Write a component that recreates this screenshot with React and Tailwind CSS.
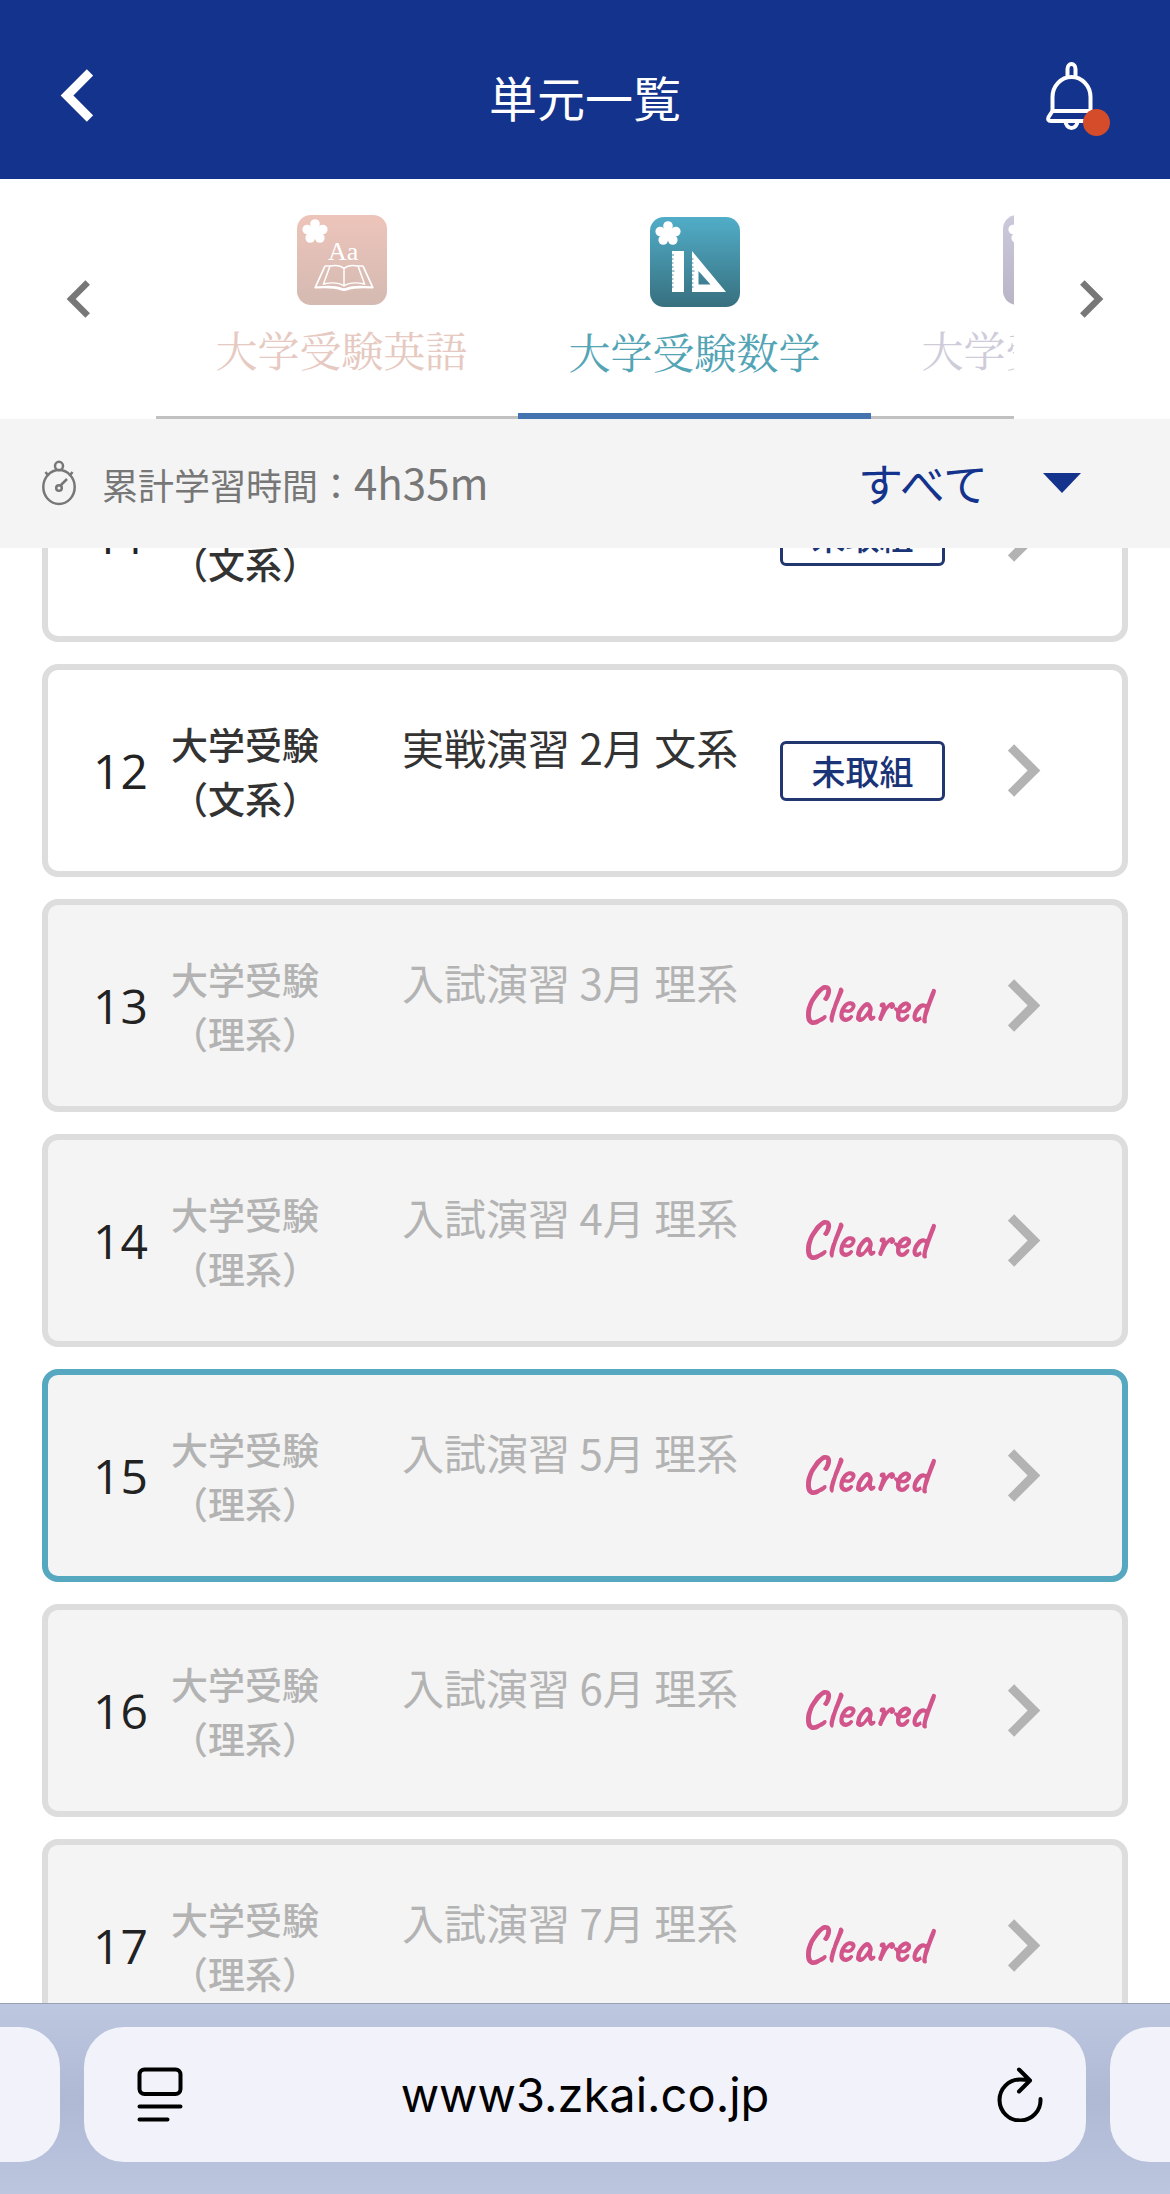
import { useLayoutEffect, useRef } from 'react';

const units = [
  { no: 11, course: '大学受験', group: '（文系）', title: '実戦演習 1月 文系', cleared: false },
  { no: 12, course: '大学受験', group: '（文系）', title: '実戦演習 2月 文系', cleared: false },
  { no: 13, course: '大学受験', group: '（理系）', title: '入試演習 3月 理系', cleared: true },
  { no: 14, course: '大学受験', group: '（理系）', title: '入試演習 4月 理系', cleared: true },
  { no: 15, course: '大学受験', group: '（理系）', title: '入試演習 5月 理系', cleared: true, current: true },
  { no: 16, course: '大学受験', group: '（理系）', title: '入試演習 6月 理系', cleared: true },
  { no: 17, course: '大学受験', group: '（理系）', title: '入試演習 7月 理系', cleared: true },
];

const subjects = [
  { id: 'english', label: '大学受験英語', color: 'text-[#e6c9c0]', from: '#edc4ba', to: '#d4bab2' },
  { id: 'math', label: '大学受験数学', color: 'text-[#53a4b5]', from: '#51adc8', to: '#37707f', active: true },
  { id: 'physics', label: '大学受験物理', color: 'text-[#cfccda]', from: '#cdc9dc', to: '#b9b5c6' },
];

function Chevron({ left, className }) {
  return (
    <svg viewBox="0 0 33 53" className={className} fill="none" stroke="currentColor" strokeWidth="9" aria-hidden="true">
      <path d={left ? 'M30 3.5 7 26.5 30 49.5' : 'M3 3.5 26 26.5 3 49.5'} />
    </svg>
  );
}

function BellIcon() {
  return (
    <svg viewBox="0 0 55 72" className="h-[72px] w-[55px]" fill="none" stroke="currentColor" strokeWidth="4" strokeLinejoin="round" aria-hidden="true">
      <path d="M23.5 17V9a4 5 0 0 1 8 0v8" />
      <path d="M8.5 51V37a19 20 0 0 1 38 0v14Z" />
      <path d="M8.5 51 4.6 57q-1.6 4 2.4 4h41q4 0 2.4-4L46.5 51" />
      <path d="M21.5 61a6 7 0 0 0 12 0" />
    </svg>
  );
}

function StopwatchIcon() {
  return (
    <svg viewBox="0 0 34 46" className="h-[46px] w-[34px]" fill="none" stroke="currentColor" strokeWidth="2.5" aria-hidden="true">
      <ellipse cx="17" cy="27" rx="15.7" ry="17" />
      <ellipse cx="17" cy="6" rx="4" ry="4.2" />
      <circle cx="17" cy="28" r="2.8" />
      <path d="M18.5 25.5 25 19M3.5 12l3 4M30.5 12l-3 4" />
    </svg>
  );
}

function SubjectIcon({ subject }) {
  const { id, from, to } = subject;
  return (
    <svg viewBox="0 0 90 90" className="h-[90px] w-[90px]" aria-hidden="true">
      <defs>
        <linearGradient id={`bg-${id}`} x1="0" y1="0" x2="0" y2="1">
          <stop offset="0" stopColor={from} />
          <stop offset="1" stopColor={to} />
        </linearGradient>
      </defs>
      <rect width="90" height="90" rx="14" fill={`url(#bg-${id})`} />
      <g fill="#fff">
        <circle cx="18" cy="9" r="4.8" />
        <circle cx="25.8" cy="14.5" r="4.8" />
        <circle cx="22.8" cy="23" r="4.8" />
        <circle cx="13.2" cy="23" r="4.8" />
        <circle cx="10.2" cy="14.5" r="4.8" />
        <circle cx="18" cy="17" r="6.5" />
      </g>
      {id === 'english' && (
        <>
          <text x="31" y="44.5" fontSize="26" fill="#fff" fontFamily="Liberation Serif, serif">Aa</text>
          <path d="M28 51 18 73M66 51l10 22" fill="none" stroke="#fff" strokeWidth="1.8" />
          <path d="M18 71.5q19-2 26 1 3 1.5 6 0 7-3 26-1v2q-19-1-24.5 1.5-4.5 2-9 0Q37 72.5 18 73.5Z" fill="#fff" />
          <path d="M28 51h5M61 51h5M47 53.5Q42 49 33 51l-6.5 18Q40 66 47 71q7-5 20.5-2L61 51q-9-2-14 2.5V71" fill="none" stroke="#fff" strokeWidth="1.5" />
        </>
      )}
      {id === 'math' && (
        <>
          <path d="M22 34h12v41H22Z" fill="#fff" />
          <path d="M42 34 76 75H42ZM48.5 54v13.5H60.5Z" fill="#fff" fillRule="evenodd" />
          <path d="M21.5 38h2.5M21.5 42h2M21.5 46h2M21.5 50h2M21.5 54h3M21.5 58h2M21.5 62h2M21.5 66h2M21.5 70h2M41.5 42h2M41.5 46h2M41.5 50h2M41.5 54h3M41.5 58h2M41.5 62h2M41.5 66h2M41.5 70h2" stroke="#3f8ca1" strokeWidth="1" />
        </>
      )}
    </svg>
  );
}

function Header() {
  return (
    <header className="grid h-[179px] shrink-0 grid-cols-[1fr_auto_1fr] items-center bg-[#14338c] px-[60px] pt-3 text-white">
      <button type="button" aria-label="戻る" className="justify-self-start">
        <Chevron left className="h-[53px] w-[33px]" />
      </button>
      <h1 className="text-5xl whitespace-nowrap">単元一覧</h1>
      <button type="button" aria-label="お知らせ" className="relative justify-self-end pr-[11px]">
        <BellIcon />
        <span className="absolute right-0 -bottom-1 size-[27px] rounded-full bg-[#d44c29]" />
      </button>
    </header>
  );
}

function SubjectTabs() {
  return (
    <nav className="flex h-60 shrink-0 bg-white text-[#777]">
      <button type="button" aria-label="前の科目" className="flex w-[156px] shrink-0 items-center justify-center">
        <Chevron left className="h-[38px] w-6" />
      </button>
      <div className="flex min-w-0 flex-1 overflow-hidden pl-[9px] shadow-[inset_0_-3px_0_#c1c1c1]">
        {subjects.map((subject) => (
          <button
            key={subject.id}
            type="button"
            className={`flex w-[353px] shrink-0 flex-col items-center gap-4 text-[42px] leading-[56px] ${subject.color} ${
              subject.active ? 'border-b-[6px] border-[#4573b0] pt-[38px]' : 'pt-9'
            }`}
          >
            <SubjectIcon subject={subject} />
            <span className="font-['Noto_Serif_CJK_JP','Noto_Sans_CJK_JP',serif] whitespace-nowrap">{subject.label}</span>
          </button>
        ))}
      </div>
      <button type="button" aria-label="次の科目" className="flex w-[156px] shrink-0 items-center justify-center">
        <Chevron className="h-[38px] w-6" />
      </button>
    </nav>
  );
}

function FilterBar() {
  return (
    <div className="flex h-[129px] shrink-0 items-center justify-between bg-[#f4f4f4] pr-[89px] pb-0.5 pl-[42px]">
      <div className="flex items-center gap-[26px] text-[#777]">
        <StopwatchIcon />
        <p className="text-4xl whitespace-nowrap">
          累計学習時間：<span className="text-[42px]">4h35m</span>
        </p>
      </div>
      <label className="relative flex items-center text-[#14338c]">
        <span className="sr-only">絞り込み</span>
        <select className="w-[223px] appearance-none bg-transparent text-[45px] leading-[60px] outline-none">
          <option>すべて</option>
          <option>未取組</option>
          <option>Cleared</option>
        </select>
        <svg viewBox="0 0 38 20" className="pointer-events-none absolute right-0 h-5 w-[38px]" fill="currentColor" aria-hidden="true">
          <path d="M0 0h38L19 20Z" />
        </svg>
      </label>
    </div>
  );
}

function UnitCard({ unit }) {
  const border = unit.current ? 'border-[#55a8c0]' : 'border-[#ddd]';
  const tone = unit.cleared ? 'bg-[#f4f4f4] text-[#b3b3b3]' : 'bg-white text-[#333]';

  return (
    <li>
      <a href={`#unit-${unit.no}`} className={`flex h-[213px] items-center rounded-2xl border-[6px] pr-[81px] pl-[45px] ${border} ${tone}`}>
        <span className="w-[78px] shrink-0 font-['Open_Sans',sans-serif] text-5xl text-[#222]">{unit.no}</span>
        <span className="flex w-[231px] shrink-0 flex-col text-[37px] leading-[54px] font-medium">
          <span>{unit.course}</span>
          <span>{unit.group}</span>
        </span>
        <span className="flex-1 self-start pt-[49px] text-[42px] leading-[56px] whitespace-nowrap">{unit.title}</span>
        <span className="flex w-[165px] shrink-0 justify-center">
          {unit.cleared ? (
            <span className="pl-1 font-['Caveat','Lato',sans-serif] text-[51px] font-semibold text-[#d1548a]">Cleared</span>
          ) : (
            <span className="flex h-[60px] w-full items-center justify-center rounded-md border-[3px] border-[#22366f] text-[34px] font-medium text-[#1a3478]">
              未取組
            </span>
          )}
        </span>
        <Chevron className="ml-[63px] h-[53px] w-[33px] shrink-0 text-[#b3b3b3]" />
      </a>
    </li>
  );
}

function UnitList() {
  const ref = useRef(null);

  // open with unit 12 as the first full card
  useLayoutEffect(() => {
    ref.current.scrollTop = 119;
  }, []);

  return (
    <main ref={ref} className="min-h-0 flex-1 overflow-y-auto px-[42px] [scrollbar-width:none]">
      <ul className="flex flex-col gap-[22px] pb-6">
        {units.map((unit) => (
          <UnitCard key={unit.no} unit={unit} />
        ))}
      </ul>
    </main>
  );
}

function BrowserBar() {
  return (
    <footer className="flex h-[191px] shrink-0 gap-6 border-t border-[#989fb6] bg-linear-to-b from-[#bdc7e0] via-[#afb9d4] to-[#bcc6df] pt-[23px] pb-8 font-['Inter',sans-serif] text-black">
      <div className="w-[60px] rounded-r-[40px] bg-[#f2f3fa]" />
      <div className="grid flex-1 grid-cols-[1fr_auto_1fr] items-center rounded-[40px] bg-[#f2f3fa] px-[43px]">
        <button type="button" aria-label="ページ設定" className="justify-self-start pl-2.5">
          <svg viewBox="0 0 46 55" className="h-[55px] w-[46px]" fill="none" stroke="currentColor" strokeWidth="4" strokeLinecap="round" aria-hidden="true">
            <rect x="2.5" y="2.5" width="41" height="24.5" rx="5" />
            <path d="M2.5 39.5h41M2.5 52.5h28" />
          </svg>
        </button>
        <button type="button" className="text-[47px] leading-[60px]">www3.zkai.co.jp</button>
        <button type="button" aria-label="再読み込み" className="justify-self-end">
          <svg viewBox="0 0 46 55" className="h-[55px] w-[46px]" fill="none" stroke="currentColor" strokeWidth="4" strokeLinecap="round" strokeLinejoin="round" aria-hidden="true">
            <path d="M43.5 32A20.5 20.5 0 1 1 23 12.5q5 0 10 1M22 2.5l11 11-11 11" />
          </svg>
        </button>
      </div>
      <div className="w-[60px] rounded-l-[40px] bg-[#f2f3fa]" />
    </footer>
  );
}

export default function App() {
  return (
    <div lang="ja" className="flex h-screen flex-col overflow-hidden bg-white font-['Noto_Sans_CJK_JP',sans-serif]">
      <Header />
      <SubjectTabs />
      <FilterBar />
      <UnitList />
      <BrowserBar />
    </div>
  );
}
